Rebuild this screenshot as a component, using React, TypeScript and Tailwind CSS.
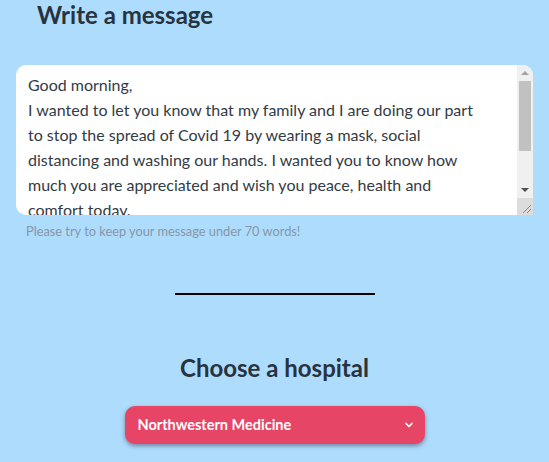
import { ChevronDown } from "lucide-react";

const lines = [
  "Good morning,",
  "I wanted to let you know that my family and I are doing our part",
  "to stop the spread of Covid 19 by wearing a mask, social",
  "distancing and washing our hands. I wanted you to know how",
  "much you are appreciated and wish you peace, health and",
  "comfort today.",
];

export default function App() {
  return (
    <div
      className="min-h-[462px] w-full overflow-hidden bg-[#addcfd] text-[#2c3a47]"
      style={{ fontFamily: "Lato, 'Open Sans', sans-serif" }}
    >
      <h2 className="pl-[37px] pt-[1px] text-[24px] font-bold leading-[28px] text-[#29333d]">
        Write a message
      </h2>

      <div className="mx-[16px] mt-[36px] flex h-[150px] overflow-hidden rounded-l-[10px] rounded-tr-[10px] bg-white">
        <div className="flex-1 overflow-hidden pl-[12px] pt-[7px] text-[16px] leading-[25px] text-[#333b44]">
          {lines.map((l) => (
            <div key={l} className="whitespace-nowrap">
              {l}
            </div>
          ))}
        </div>
        <div className="flex w-[16px] flex-col bg-[#f0f0f0]">
          <div className="flex h-[16px] items-center justify-center">
            <div className="h-0 w-0 border-x-[4px] border-b-[4px] border-x-transparent border-b-[#a3a3a3]" />
          </div>
          <div className="mx-[2px] h-[70px] bg-[#c1c1c1]" />
          <div className="flex-1" />
          <div className="flex h-[16px] items-center justify-center">
            <div className="h-0 w-0 border-x-[4px] border-t-[4px] border-x-transparent border-t-[#505050]" />
          </div>
          <div className="relative h-[17px] bg-[#dcdcdc]">
            <svg className="absolute bottom-[1px] right-[1px]" width="12" height="12" viewBox="0 0 12 12">
              <path d="M11 3 L3 11 M11 7 L7 11" stroke="#8a8a8a" strokeWidth="1" />
            </svg>
          </div>
        </div>
      </div>

      <p className="pl-[26px] pt-[8px] text-[12.8px] leading-[16px] text-[#8797a6]">
        Please try to keep your message under 70 words!
      </p>

      <div className="mx-auto mt-[54px] h-[2px] w-[200px] bg-black" />

      <h2 className="mt-[59px] text-center text-[24px] font-bold leading-[28px] text-[#29333d]">
        Choose a hospital
      </h2>

      <div className="mx-auto mt-[24px] flex h-[38px] w-[300px] items-center justify-between rounded-[10px] bg-[#e64565] pl-[13px] pr-[10px] text-[14.5px] font-bold text-white shadow-[0_2px_4px_rgba(60,40,60,0.5)]">
        <span>Northwestern Medicine</span>
        <ChevronDown className="h-[12px] w-[12px]" strokeWidth={3.5} />
      </div>
    </div>
  );
}
